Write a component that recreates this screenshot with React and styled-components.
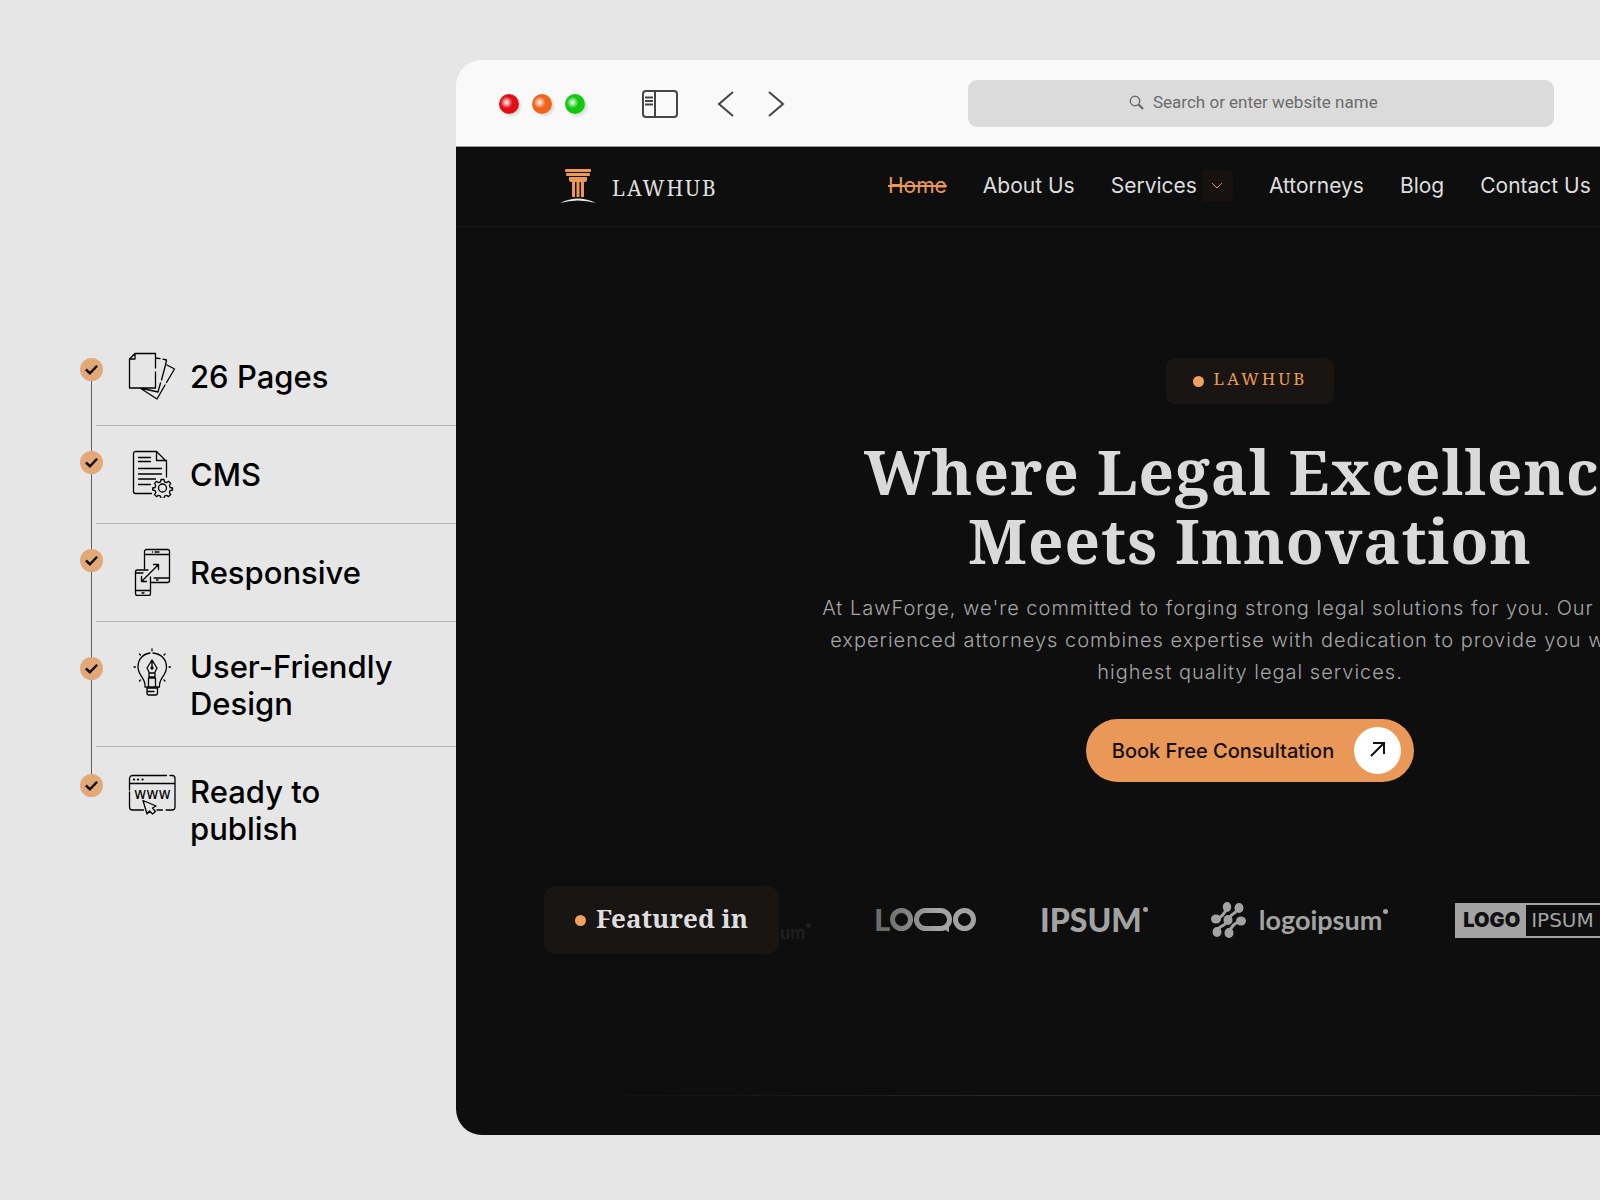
import React from "react";
import styled, { createGlobalStyle } from "styled-components";

const GlobalStyle = createGlobalStyle`
  * {
    box-sizing: border-box;
  }
  body {
    margin: 0;
    background: #e6e6e6;
    color: #000;
    font-family: Inter, "Liberation Sans", sans-serif;
  }
  h1, p, ul {
    margin: 0;
    padding: 0;
  }
  ul {
    list-style: none;
  }
  a {
    color: inherit;
    text-decoration: none;
  }
  button {
    border: 0;
    padding: 0;
    background: none;
    color: inherit;
    font: inherit;
  }
`;

const serif = `"Noto Serif", "DejaVu Serif Condensed", "DejaVu Serif", serif`;

const Page = styled.div`
  display: flex;
  align-items: flex-start;
  min-height: 100vh;
  padding: 60px 0 64px;
  overflow: hidden;
`;

/* feature list */

const Features = styled.ul`
  flex: 0 0 456px;
  padding: 270px 0 0 80px;
`;

const Feature = styled.li`
  position: relative;
  display: flex;
  padding-left: 16px;

  &:not(:last-child)::before {
    content: "";
    position: absolute;
    left: 11px;
    top: 40px;
    bottom: -40px;
    width: 1px;
    background: #606060;
  }
`;

const FeatureBody = styled.div`
  flex: 1;
  display: flex;
  align-items: flex-start;
  gap: 14px;
  min-height: ${(p) => p.$height}px;
  padding: ${(p) => p.$pad}px 0 24px 32px;
  border-bottom: ${(p) => (p.$last ? "0" : "1px solid #b5b7b7")};

  svg {
    flex: none;
  }
`;

const FeatureName = styled.span`
  width: 220px;
  padding-top: ${(p) => (p.$tall ? 0 : 6)}px;
  font-size: 31px;
  font-weight: 500;
  line-height: 37px;
`;

const Tick = styled.span`
  position: absolute;
  left: 0;
  top: ${(p) => p.$top}px;
  display: flex;
  align-items: center;
  justify-content: center;
  width: 23px;
  height: 23px;
  border-radius: 50%;
  background: #e3a878;
`;

/* browser window */

const Browser = styled.main`
  flex: 0 0 calc(100vw - 12px);
  border-radius: 26px;
  overflow: hidden;
`;

const Toolbar = styled.div`
  display: flex;
  align-items: center;
  height: 87px;
  padding: 1px 43px 0;
  background: #f9f9f9;
  border-bottom: 1px solid #999;
`;

const Lights = styled.div`
  display: flex;
  gap: 13px;
  margin-right: 57px;
`;

const Light = styled.button`
  width: 20px;
  height: 20px;
  border-radius: 50%;
  background: radial-gradient(circle at 38% 42%, #fff8 0, ${(p) => p.$color} 35%);
  box-shadow: 2px 2px 3px #0002;
`;

const ToolButton = styled.button`
  display: flex;
  margin-right: ${(p) => p.$gap || 0}px;
  color: #444;
`;

const Search = styled.label`
  flex: 0 1 586px;
  display: flex;
  align-items: center;
  justify-content: center;
  gap: 9px;
  height: 47px;
  margin-left: 183px;
  padding-bottom: 3px;
  border-radius: 9px;
  background: #dbdbdb;
  color: #6c6c6c;

  input {
    width: 240px;
    padding: 0;
    border: 0;
    outline: 0;
    background: none;
    color: inherit;
    font: 17px Roboto, sans-serif;
  }
  input::placeholder {
    color: inherit;
    opacity: 1;
  }
`;

const Site = styled.div`
  background: #0e0e0e;
`;

const Nav = styled.nav`
  display: flex;
  align-items: center;
  height: 80px;
  padding: 0 104px 2px;
  border-bottom: 1px solid #1a1a1a;
  color: #dedede;
`;

const Brand = styled.a`
  display: flex;
  align-items: center;
  gap: 16px;
  width: 328px;
  font: 21px/32px ${serif};
  letter-spacing: 2px;

  span {
    padding-top: 4px;
  }
`;

const Links = styled.ul`
  display: flex;
  align-items: center;
  gap: 36px;
  font-size: 21px;
  white-space: nowrap;

  li {
    display: flex;
    align-items: center;
    gap: 5px;
  }
`;

const NavLink = styled.a`
  color: ${(p) => (p.$active ? "#eb9856" : "#dedede")};
  text-decoration: ${(p) => (p.$active ? "line-through" : "none")};
`;

const MoreButton = styled.button`
  display: flex;
  align-items: center;
  justify-content: center;
  width: 31px;
  height: 32px;
  border-radius: 4px;
  background: #17120f;
  color: #eb9856;
`;

const Hero = styled.section`
  display: flex;
  flex-direction: column;
  align-items: center;
  padding-top: 131px;
  text-align: center;
`;

const Badge = styled.div`
  display: flex;
  align-items: center;
  gap: 10px;
  height: ${(p) => (p.$large ? 68 : 46)}px;
  padding: 0 ${(p) => (p.$large ? 31 : 27)}px;
  border-radius: ${(p) => (p.$large ? 12 : 8)}px;
  background: #181513;
  color: ${(p) => (p.$large ? "#dedede" : "#eb9856")};
  font: ${(p) => (p.$large ? "bold 26px" : "17px")}/32px ${serif};
  letter-spacing: ${(p) => (p.$large ? 0 : 3)}px;
  white-space: nowrap;

  &::before {
    content: "";
    width: 11px;
    height: 11px;
    border-radius: 50%;
    background: #f0a060;
  }
  span {
    padding-bottom: 4px;
  }
`;

const Title = styled.h1`
  padding-top: 33px;
  color: #dadada;
  font: bold 62px/69px ${serif};
  letter-spacing: 1px;
  white-space: nowrap;
`;

const Lead = styled.p`
  max-width: 880px;
  padding-top: 17px;
  color: #a6a6a6;
  font-size: 20px;
  font-weight: 300;
  line-height: 32px;
  letter-spacing: 1px;
`;

const Cta = styled.a`
  display: flex;
  align-items: center;
  gap: 20px;
  height: 63px;
  margin-top: 31px;
  padding: 0 13px 0 26px;
  border-radius: 32px;
  background: #e99858;
  color: #15100c;
  font-size: 20px;
  font-weight: 500;
`;

const CtaIcon = styled.span`
  display: flex;
  align-items: center;
  justify-content: center;
  width: 47px;
  height: 47px;
  padding-bottom: 4px;
  border-radius: 50%;
  background: #fff;
`;

const Featured = styled.section`
  display: flex;
  align-items: center;
  margin-top: 104px;
  padding-left: 88px;
  color: #a3a3a3;
`;

const Mark = styled.span`
  display: flex;
  align-items: flex-start;
  gap: 1px;
  font-family: Lato, "Open Sans", sans-serif;
  font-size: ${(p) => p.$size}px;
  font-weight: ${(p) => p.$weight || 700};
  line-height: 34px;

  &::after {
    content: "";
    width: 5px;
    height: 5px;
    margin-top: ${(p) => p.$dot}px;
    border-radius: 50%;
    background: currentColor;
  }
`;

const Faded = styled.span`
  width: 96px;
  padding: 24px 0 0 1px;
  color: #202020;
`;

const Sponsors = styled.ul`
  display: flex;
  align-items: center;
  gap: 63px;

  li {
    display: flex;
    align-items: center;
    gap: 12px;
  }
`;

const BoxedLogo = styled.span`
  display: flex;
  margin-left: 4px;
  border: 2px solid #a3a3a3;
  font: 20px/31px "DejaVu Sans", sans-serif;
  padding-right: 8px;

  b {
    margin-right: 5px;
    padding: 0 6px;
    background: #a3a3a3;
    color: #101010;
    font: 900 20px/31px Inter, sans-serif;
  }
`;

const Rule = styled.hr`
  height: 1px;
  margin: 141px 104px 0;
  border: 0;
  background: linear-gradient(90deg, #0e0e0e, #282828 35%, #282828 65%, #0e0e0e);
`;

const Footer = styled.div`
  height: 39px;
`;

const Icon = ({ size = 48, width = 1.3, children, ...rest }) => (
  <svg width={size} height={size} viewBox="0 0 48 48" fill="none" stroke="currentColor"
    strokeWidth={width} strokeLinecap="round" strokeLinejoin="round" aria-hidden="true" {...rest}>
    {children}
  </svg>
);

const PagesIcon = () => (
  <Icon>
    <path d="M7 1.5h20.500v14.500M27.500 20v16h-26V7L7 1.500V7H1.500M28 6l4 .7M35 7.200l3.500.8-1 5-4 15M32.500 31l-2.500 9-18-4M39 13l7.500 4-8 13.500M37 33l-8 14-17-11" />
  </Icon>
);

const CmsIcon = () => (
  <Icon>
    <path d="M23.500 43.500H7.500a2 2 0 0 1-2-2V3.500a2 2 0 0 1 2-2h21l10 10v15.500M28.500 1.500v9h10" />
    <path d="M10.500 7.500h12M10.500 11.500h12M10.500 18.500h23M10.500 24h23M10.500 29h17M10.500 34.500h12" />
    <circle cx="34.500" cy="38" r="4" />
    <path d="M33 29.500h3l.5 2.300 2 .8 2-1.300 2.200 2.200-1.300 2 .8 2 2.300.5v2l-2.300.6-.8 2 1.300 2-2.200 2-2-1.300-2 .8-.5 2.300h-3l-.5-2.300-2-.8-2 1.300-2-2 1.300-2-.8-2-2.300-.6v-2l2.300-.5.8-2-1.300-2 2-2.200 2 1.300 2-.8z" />
  </Icon>
);

const DevicesIcon = () => (
  <Icon>
    <path d="M16.500 21V3.500a2 2 0 0 1 2-2h21a2 2 0 0 1 2 2v29a2 2 0 0 1-2 2h-17M16.500 6.500h25M26 30h15.500M27 4h4M24.500 4h.1M28.500 32h1.500" />
    <path d="M20 22H9.500a2 2 0 0 0-2 2v21.500a2 2 0 0 0 2 2h11a2 2 0 0 0 2-2V29M7.500 25H15M7.500 42.500h15M14 45h2" />
    <path d="m13.500 33.500 17-17M25.500 16.500h5v5M13.500 28.500v5h5" />
  </Icon>
);

const IdeaIcon = () => (
  <Icon>
    <path d="M17 39c1-9-7-11-7-20C10 10.500 16 5.500 22 5M25 5c7 .5 13.500 5.500 13.500 14 0 9-8 11-7 20M17 39h14.500" />
    <path d="M19 40h10.500v5a2 2 0 0 1-2 2H21a2 2 0 0 1-2-2zM19 43.500h7" />
    <path d="m24 12-5 8 2.500 5h5l2.500-5zM24 13v6M21 25v4h6v-4M20.500 30h7v8M20.500 30v8" />
    <circle cx="24" cy="20" r="1" />
    <path d="M24 .8v2M11.500 6l1 1M37 6l-1 1M6 19h1.500M41 19h1.500M11.500 33l1-1M37 33l-1-1" />
  </Icon>
);

const PublishIcon = () => (
  <Icon>
    <path d="M1.500 17V5.500a3 3 0 0 1 3-3h34M42 2.500h2a3 3 0 0 1 3 3V34a3 3 0 0 1-3 3h-6M34.500 37H29M1.500 19v15a3 3 0 0 0 3 3h11M1.500 10.500h45" />
    <text x="6" y="26" fill="currentColor" stroke="none" fontFamily="DejaVu Sans" fontSize="15">www</text>
    <path d="M6 6.500h.1M10 6.500h.1M14.500 6.500h.1" strokeWidth="2.2" />
    <path d="m15 27.500 4 13.500 2.500-3 3 3 3-2.500-3-3.500 3.500-2z" fill="#e6e6e6" />
  </Icon>
);

const BrandIcon = () => (
  <svg width="36" height="34" viewBox="0 0 36 34" aria-hidden="true">
    <g fill="#eb9856">
      <rect x="5" width="26" height="3" rx="1" />
      <rect x="6" y="4" width="24" height="3" rx="1" />
      <path d="M9 8h18v3q0 2-3 2H12q-3 0-3-2z" />
      <path d="M12 12h3v16h-3zM16.500 12h3v16h-3zM21 12h3v16h-3z" />
    </g>
    <path d="M0 34q18-9 36 0-18-5-36 0z" fill="#e6e6e6" />
  </svg>
);

const LoqoLogo = () => (
  <svg width="102" height="26" viewBox="0 0 102 26" role="img" aria-label="Logo">
    <defs>
      <linearGradient id="loqoFade" gradientUnits="userSpaceOnUse" x1="0" y1="0" x2="60" y2="0">
        <stop stopColor="#606060" />
        <stop offset="1" stopColor="#a3a3a3" />
      </linearGradient>
    </defs>
    <text x="-1" y="24" fill="#6c6c6c" fontFamily="Lato" fontSize="31" fontWeight="900">L</text>
    <g fill="none" stroke="url(#loqoFade)" strokeWidth="5">
      <circle cx="26.500" cy="12.500" r="9" />
      <rect x="41.500" y="3.500" width="33" height="18" rx="9" />
      <circle cx="89.500" cy="12.500" r="9" />
    </g>
    <path d="m66 21 8 4 0-7z" fill="#a3a3a3" />
  </svg>
);

const DotsLogo = () => (
  <svg width="36" height="36" viewBox="0 0 36 36" fill="currentColor" stroke="currentColor" aria-hidden="true">
    <path d="M5 17Q13 15 16 5M6 30q2-5 5-6t6-6 5-6 6-6M18 31q3-10 12-12" fill="none" strokeWidth="3" />
    <g stroke="none">
      <ellipse cx="16" cy="5" rx="4.200" ry="5" />
      <ellipse cx="28" cy="6" rx="4.500" ry="5" />
      <ellipse cx="5" cy="17" rx="5" ry="4.500" />
      <ellipse cx="17" cy="18" rx="4.500" ry="5" />
      <ellipse cx="30" cy="19" rx="5" ry="4.500" />
      <ellipse cx="6" cy="30" rx="4.500" ry="5" />
      <ellipse cx="18" cy="31" rx="4.500" ry="5" />
    </g>
  </svg>
);

const features = [
  { name: "26 Pages", icon: PagesIcon, height: 96, pad: 22, tick: 28 },
  { name: "CMS", icon: CmsIcon, height: 98, pad: 24, tick: 25 },
  { name: "Responsive", icon: DevicesIcon, height: 98, pad: 24, tick: 25 },
  { name: "User-Friendly Design", icon: IdeaIcon, height: 125, pad: 26, tick: 35, tall: true },
  { name: "Ready to publish", icon: PublishIcon, height: 120, pad: 26, tick: 27, tall: true },
];

export default function App() {
  return (
    <>
      <GlobalStyle />
      <Page>
        <Features>
          {features.map(({ name, icon: FeatureIcon, height, pad, tick, tall }, i) => (
            <Feature key={name}>
              <Tick $top={tick}>
                <Icon size={15} width={8} stroke="#111" strokeLinecap="butt" strokeLinejoin="miter">
                  <path d="m6 24 13 12L42 12" />
                </Icon>
              </Tick>
              <FeatureBody $height={height} $pad={pad} $last={i === features.length - 1}>
                <FeatureIcon />
                <FeatureName $tall={tall}>{name}</FeatureName>
              </FeatureBody>
            </Feature>
          ))}
        </Features>

        <Browser>
          <Toolbar>
            <Lights>
              <Light $color="#e00f16" aria-label="Close" />
              <Light $color="#f0641c" aria-label="Minimize" />
              <Light $color="#12c80c" aria-label="Zoom" />
            </Lights>
            <ToolButton $gap={39} aria-label="Sidebar">
              <svg width="36" height="28" viewBox="0 0 36 28" fill="none" stroke="currentColor" strokeWidth="2">
                <rect x="1" y="1" width="34" height="26" rx="3" />
                <path d="M13 1v26M3 7.500h8M3 11h8M3 14.500h8" />
              </svg>
            </ToolButton>
            <ToolButton $gap={34} aria-label="Back">
              <svg width="17" height="28" viewBox="0 0 17 28" fill="none" stroke="currentColor" strokeWidth="2">
                <path d="M16 2 2 14l14 12" />
              </svg>
            </ToolButton>
            <ToolButton aria-label="Forward">
              <svg width="17" height="28" viewBox="0 0 17 28" fill="none" stroke="currentColor" strokeWidth="2">
                <path d="m1 2 14 12L1 26" />
              </svg>
            </ToolButton>
            <Search>
              <svg width="15" height="15" viewBox="0 0 15 15" fill="none" stroke="currentColor" strokeWidth="1.500">
                <circle cx="6" cy="6" r="4.700" />
                <path d="m9.500 9.500 4.500 4.500" strokeWidth="2.400" />
              </svg>
              <input aria-label="Address" placeholder="Search or enter website name" />
            </Search>
          </Toolbar>

          <Site>
            <Nav>
              <Brand href="#home">
                <BrandIcon />
                <span>LAWHUB</span>
              </Brand>
              <Links>
                <li><NavLink href="#home" $active>Home</NavLink></li>
                <li><NavLink href="#about">About Us</NavLink></li>
                <li>
                  <NavLink href="#services">Services</NavLink>
                  <MoreButton aria-label="More services">
                    <svg width="12" height="8" viewBox="0 0 12 8" fill="none" stroke="currentColor">
                      <path d="m1 1 5 5 5-5" />
                    </svg>
                  </MoreButton>
                </li>
                <li><NavLink href="#attorneys">Attorneys</NavLink></li>
                <li><NavLink href="#blog">Blog</NavLink></li>
                <li><NavLink href="#contact">Contact Us</NavLink></li>
              </Links>
            </Nav>

            <Hero>
              <Badge><span>LAWHUB</span></Badge>
              <Title>
                Where Legal Excellence
                <br />
                Meets Innovation
              </Title>
              <Lead>
                At LawForge, we're committed to forging strong legal solutions for you. Our team of
                experienced attorneys combines expertise with dedication to provide you with the
                highest quality legal services.
              </Lead>
              <Cta href="#book">
                Book Free Consultation
                <CtaIcon>
                  <svg width="16" height="16" viewBox="0 0 16 16" fill="none" stroke="#111" strokeWidth="2">
                    <path d="M1 15 14 2M3 2h11v11" />
                  </svg>
                </CtaIcon>
              </Cta>
            </Hero>

            <Featured>
              <Badge $large><span>Featured in</span></Badge>
              <Faded>
                <Mark $size={18} $dot={8}>um</Mark>
              </Faded>
              <Sponsors>
                <li><LoqoLogo /></li>
                <li><Mark $size={32} $weight={900} $dot={4}>IPSUM</Mark></li>
                <li>
                  <DotsLogo />
                  <Mark $size={27} $dot={6}>logoipsum</Mark>
                </li>
                <li><BoxedLogo><b>LOGO</b>IPSUM</BoxedLogo></li>
              </Sponsors>
            </Featured>
            <Rule />
            <Footer />
          </Site>
        </Browser>
      </Page>
    </>
  );
}
